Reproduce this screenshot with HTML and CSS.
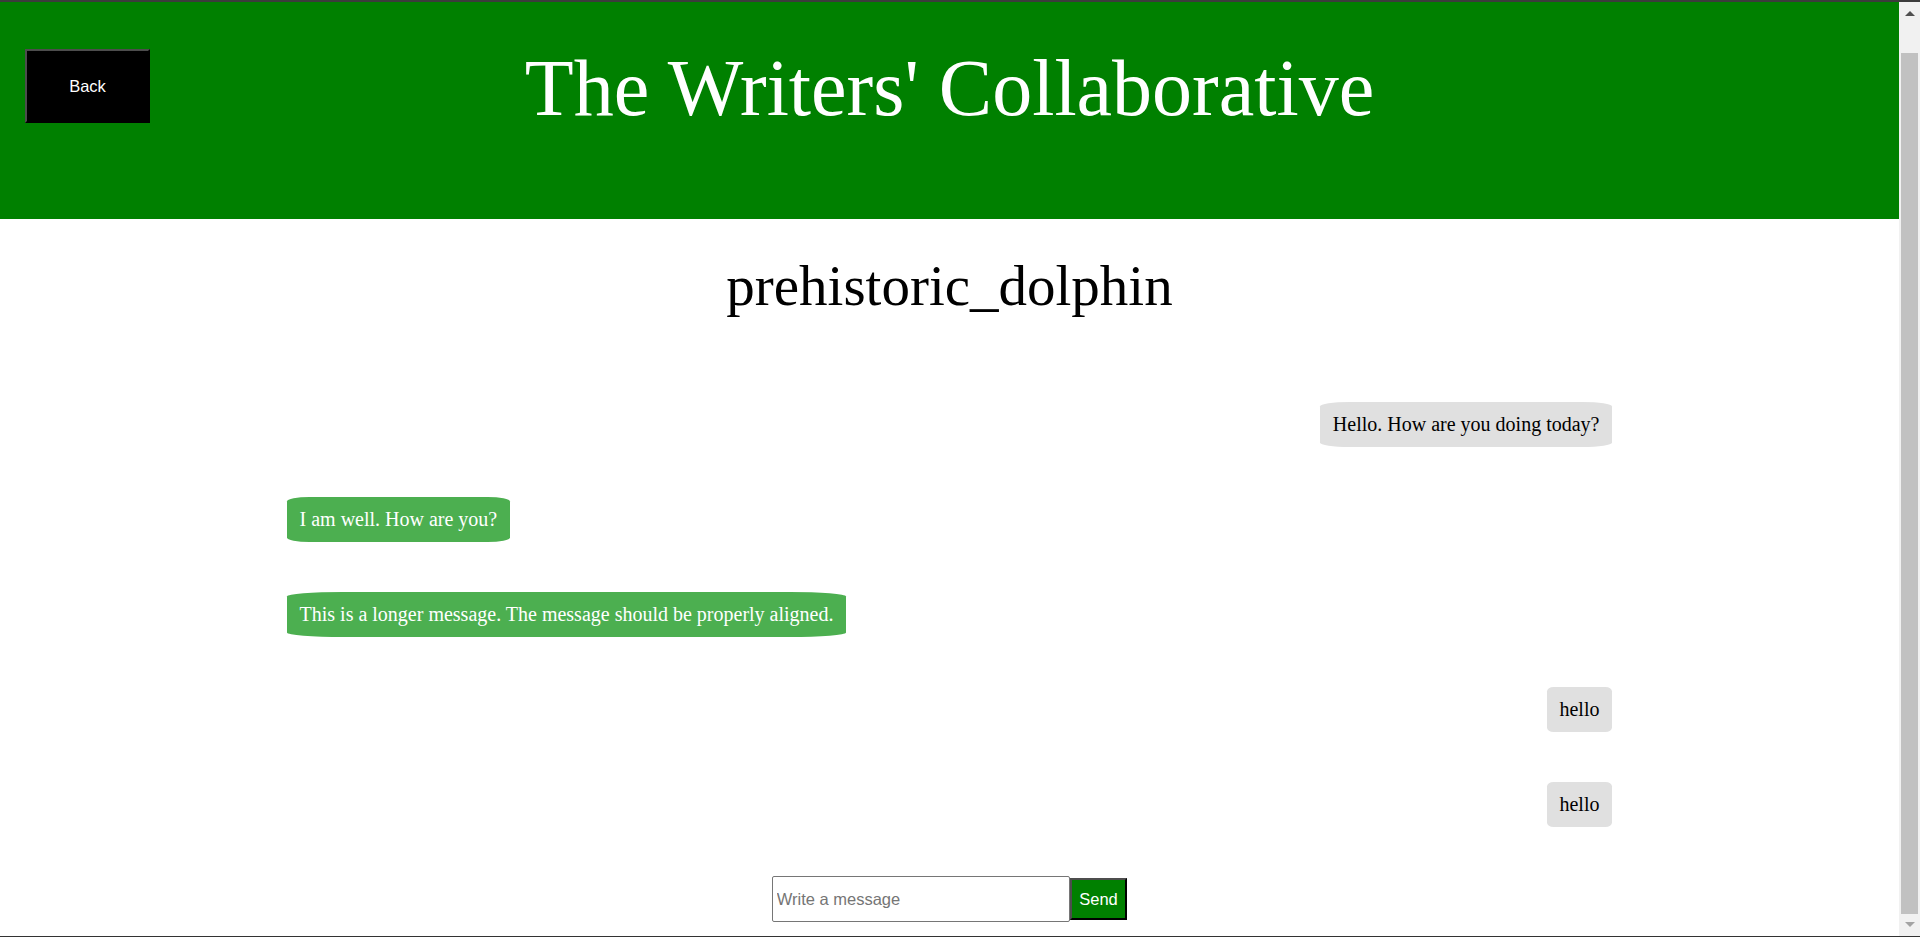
FILE: index.html
```html
<!DOCTYPE html>
<html lang="en">
<head>
<meta charset="utf-8">
<title>The Writers' Collaborative</title>
<link rel="stylesheet" href="styles.css">
</head>
<body>
<div class="page">
  <header class="site-header">
    <button class="back-btn" type="button">Back</button>
    <h1 class="site-title">The Writers' Collaborative</h1>
  </header>
  <main class="chat">
    <h2 class="chat-partner">prehistoric_dolphin</h2>
    <div class="messages">
      <div class="msg msg-sent">Hello. How are you doing today?</div>
      <div class="msg msg-received">I am well. How are you?</div>
      <div class="msg msg-received">This is a longer message. The message should be properly aligned.</div>
      <div class="msg msg-sent">hello</div>
      <div class="msg msg-sent">hello</div>
    </div>
    <form class="composer" onsubmit="return false;"><input class="composer-input" type="text" placeholder="Write a message"><button class="send-btn" type="submit">Send</button></form>
  </main>
</div>
<div class="scrollbar" aria-hidden="true">
  <div class="sb-btn"><span class="sb-arrow-up"></span></div>
  <div class="sb-track"><div class="sb-thumb"></div></div>
  <div class="sb-btn"><span class="sb-arrow-down"></span></div>
</div>
</body>
</html>
```

FILE: styles.css
```css
html {
  background: #ffffff;
}

body {
  margin: 0;
  box-sizing: border-box;
  height: 100vh;
  overflow: hidden;
  display: flex;
  border-top: 2px solid #3c3c3c;
  border-bottom: 1px solid #333333;
  font-family: "Liberation Serif", "Times New Roman", serif;
  color: #000000;
}

.page {
  flex: 1;
  min-width: 0;
  overflow: hidden;
}

/* Window scrollbar (scrolled to bottom) */
.scrollbar {
  flex: none;
  width: 21px;
  display: flex;
  flex-direction: column;
  background: #f1f1f1;
}

.sb-btn {
  flex: none;
  height: 21px;
  display: flex;
  align-items: center;
  justify-content: center;
}

.sb-arrow-up {
  width: 0;
  height: 0;
  margin-top: 2px;
  border-left: 5px solid transparent;
  border-right: 5px solid transparent;
  border-bottom: 5px solid #505050;
}

.sb-arrow-down {
  width: 0;
  height: 0;
  margin-bottom: 2px;
  border-left: 5px solid transparent;
  border-right: 5px solid transparent;
  border-top: 5px solid #a3a3a3;
}

.sb-track {
  flex: 1;
  display: flex;
  flex-direction: column;
  justify-content: flex-end;
  padding: 0 2px 1px;
}

.sb-thumb {
  height: 861px;
  background: #c1c1c1;
}

/* Header */
.site-header {
  box-sizing: border-box;
  height: 217px;
  background: #008000;
  display: grid;
  grid-template-columns: 1fr auto 1fr;
  align-items: start;
}

.back-btn {
  grid-column: 1;
  justify-self: start;
  margin: 47px 0 0 25px;
  width: 125px;
  height: 74px;
  padding: 0;
  background: #000000;
  color: #ffffff;
  font-family: "Liberation Sans", Arial, sans-serif;
  font-size: 16.5px;
  border: 2px solid;
  border-color: #4d4d4d #000000 #000000 #4d4d4d;
  cursor: pointer;
}

.site-title {
  grid-column: 2;
  margin: 41px 0 0;
  font-size: 80px;
  line-height: 91px;
  font-weight: normal;
  color: #ffffff;
  white-space: nowrap;
  text-align: center;
}

/* Chat */
.chat-partner {
  margin: 34px 0 0;
  font-size: 57px;
  line-height: 66px;
  font-weight: normal;
  text-align: center;
}

.messages {
  width: calc(70% - 4px);
  margin: 83px auto 0;
  display: flex;
  flex-direction: column;
  gap: 50px;
}

.msg {
  font-size: 20px;
  line-height: 23px;
  padding: 11px 12.7px;
  border-radius: 10%;
  white-space: nowrap;
}

.msg-sent {
  align-self: flex-end;
  background: #e0e0e0;
  color: #000000;
}

.msg-received {
  align-self: flex-start;
  background: #4caf50;
  color: #ffffff;
}

.composer {
  margin: 49px 0 0;
  display: flex;
  justify-content: center;
  align-items: center;
}

.composer-input {
  box-sizing: border-box;
  width: 298px;
  height: 46px;
  margin: 0;
  padding: 0 4px;
  border: 1px solid #767676;
  border-radius: 2px;
  font-family: "Liberation Sans", Arial, sans-serif;
  font-size: 16.5px;
  color: #000000;
  background: #ffffff;
}

.composer-input::placeholder {
  color: #757575;
}

.send-btn {
  box-sizing: border-box;
  height: 42px;
  margin: 0;
  padding: 0 7.5px;
  background: #008000;
  color: #ffffff;
  font-family: "Liberation Sans", Arial, sans-serif;
  font-size: 16.5px;
  border: 2px solid;
  border-color: #4d4d4d #000000 #000000 #4d4d4d;
  cursor: pointer;
}
```
